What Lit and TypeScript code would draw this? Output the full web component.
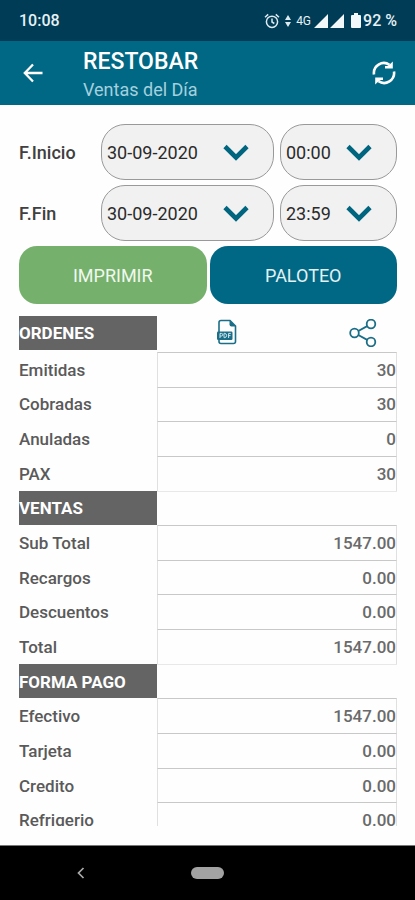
import { LitElement, html, css, svg, nothing } from "lit";
import { customElement } from "lit/decorators.js";

interface Row {
  label: string;
  value?: string;
}

const ROWS: Row[] = [
  { label: "Emitidas", value: "30" },
  { label: "Cobradas", value: "30" },
  { label: "Anuladas", value: "0" },
  { label: "PAX", value: "30" },
  { label: "VENTAS" },
  { label: "Sub Total", value: "1547.00" },
  { label: "Recargos", value: "0.00" },
  { label: "Descuentos", value: "0.00" },
  { label: "Total", value: "1547.00" },
  { label: "FORMA PAGO" },
  { label: "Efectivo", value: "1547.00" },
  { label: "Tarjeta", value: "0.00" },
  { label: "Credito", value: "0.00" },
  { label: "Refrigerio", value: "0.00" },
];

const RANGES = [
  { id: "inicio", label: "F.Inicio", date: "30-09-2020", time: "00:00" },
  { id: "fin", label: "F.Fin", date: "30-09-2020", time: "23:59" },
];

@customElement("status-bar")
export class StatusBar extends LitElement {
  static styles = css`
    :host {
      display: flex;
      align-items: center;
      justify-content: space-between;
      height: 41px;
      padding: 0 18px 0 19px;
      background: #003c55;
      color: #e6f1f5;
      font-size: 16px;
      font-weight: 500;
    }
    .tray {
      display: flex;
      align-items: center;
    }
    .network {
      font-size: 12px;
      font-weight: 400;
      margin-right: 3px;
    }
    .alarm {
      margin-right: 5px;
    }
    .data {
      margin-right: 5px;
    }
    .signal {
      margin-right: 7px;
    }
    .battery {
      margin-right: 2px;
    }
  `;

  render() {
    return html`
      <span>10:08</span>
      <div class="tray">
        <svg class="alarm" width="16" height="16" viewBox="0 0 16 16" fill="none" stroke="#dceaf0" stroke-width="1.5">
          <circle cx="8" cy="8.8" r="5.6" />
          <path d="M8 5.6V9l2.3 1.5M1 4.2l3.2-2.8M15 4.2l-3.2-2.8" />
        </svg>
        <svg class="data" width="6" height="12" viewBox="0 0 6 12" fill="#dceaf0">
          <path d="M3 0l3 5H0zM3 12l3-5H0z" />
        </svg>
        <span class="network">4G</span>
        <svg class="signal" width="30" height="14" viewBox="0 0 30 14" fill="#f2f8fa">
          <path d="M0 14L14 0v14zM16 14L30 0v14z" />
        </svg>
        <svg class="battery" width="10" height="15" viewBox="0 0 10 15" fill="#f2f8fa">
          <path d="M3 0h4v2h2q1 0 1 1v11q0 1-1 1H1q-1 0-1-1V3q0-1 1-1h2z" />
        </svg>
        <span>92 %</span>
      </div>
    `;
  }
}

@customElement("app-root")
export class AppRoot extends LitElement {
  static styles = css`
    :host {
      display: flex;
      flex-direction: column;
      height: 100vh;
      background: #fefefe;
      font-family: Roboto, sans-serif;
      color: #333;
    }
    * {
      box-sizing: border-box;
    }
    button,
    select {
      font: inherit;
      margin: 0;
    }
    .icon-button {
      display: flex;
      padding: 0;
      border: 0;
      background: none;
      cursor: pointer;
    }
    .app-bar {
      display: flex;
      flex: none;
      align-items: center;
      height: 64px;
      padding: 0 18px 0 21px;
      background: #006884;
      color: #fff;
    }
    .titles {
      flex: 1;
      margin-left: 38px;
      padding-top: 6px;
    }
    .title {
      margin: 0;
      font-size: 23px;
      line-height: 28px;
      font-weight: 500;
    }
    .subtitle {
      margin: 0;
      font-size: 18px;
      line-height: 28px;
      color: #a5d0de;
    }
    main {
      display: flex;
      flex: 1;
      flex-direction: column;
      min-height: 0;
      padding: 19px 18px 19px 19px;
    }
    .range {
      display: grid;
      grid-template-columns: 76px 173fr 117fr;
      column-gap: 6px;
      align-items: center;
      margin-bottom: 5px;
    }
    .range label {
      font-size: 18px;
      font-weight: 500;
      color: #404040;
    }
    .picker {
      position: relative;
    }
    .picker select {
      display: block;
      width: 100%;
      height: 56px;
      padding: 0 0 0 5px;
      border: 1px solid #999;
      border-radius: 24px;
      background: #f1f1f1;
      color: #2b2b2b;
      font-size: 18px;
      appearance: none;
    }
    .picker svg {
      position: absolute;
      top: 20px;
      right: 25px;
      pointer-events: none;
    }
    .actions {
      display: grid;
      grid-template-columns: 1fr 1fr;
      gap: 3px;
      margin-bottom: 12px;
    }
    .action {
      height: 58px;
      border: 0;
      border-radius: 18px;
      background: #006884;
      color: #e4f1f4;
      font-size: 18px;
      cursor: pointer;
    }
    .print {
      background: #76b06d;
      color: #f0f8ee;
    }
    .section-bar {
      display: flex;
      flex: none;
      align-items: center;
      margin-bottom: 2px;
    }
    .section {
      width: 138px;
      margin: 0;
      background: #646464;
      color: #fff;
      font-size: 17px;
      font-weight: 700;
      text-align: left;
    }
    .section-bar .section {
      line-height: 34px;
    }
    .tools {
      display: flex;
      flex: 1;
      justify-content: space-between;
      padding: 0 20px 0 59px;
    }
    .scroller {
      flex: 1;
      min-height: 0;
      overflow-y: auto;
      scrollbar-width: none;
    }
    table {
      width: 100%;
      height: 485px;
      border-spacing: 0;
      table-layout: fixed;
      color: #5a5a5a;
      font-size: 17px;
      line-height: 20px;
    }
    .labels {
      width: 138px;
    }
    th,
    td {
      padding: 0;
      border-top: 1px solid transparent;
    }
    .table-section {
      border-top-color: #646464;
    }
    .label {
      font-weight: 500;
      text-align: left;
    }
    .value {
      border: 1px solid #e0e0e0;
      border-width: 1px 1px 0 1px;
      border-top-color: #c8c8c8;
      font-weight: 500;
      color: #6a6a6a;
      text-align: right;
    }
    .blank {
      border-top-color: #e8e8e8;
    }
    .nav-bar {
      display: grid;
      flex: none;
      grid-template-columns: 1fr auto 1fr;
      align-items: center;
      height: 55px;
      background: #000;
      border-top: 1px solid #777;
    }
    .back {
      justify-self: center;
      margin-right: 30px;
    }
    .home {
      width: 33px;
      height: 12px;
      padding: 0;
      border: 0;
      border-radius: 6px;
      background: #a2a2a2;
    }
  `;

  private picker(name: string, id: string, value: string) {
    return html`
      <div class="picker">
        <select id=${id} aria-label=${name}>
          <option>${value}</option>
        </select>
        <svg width="26" height="18" viewBox="0 0 26 18" fill="none" stroke="#00667f" stroke-width="4.6">
          <path d="M2 2.5L13 13.5L24 2.5" />
        </svg>
      </div>
    `;
  }

  private shareNodes() {
    return [
      [5.5, 14],
      [22, 5],
      [22, 23],
    ].map(([x, y]) => svg`<circle cx=${x} cy=${y} r="4.3" />`);
  }

  render() {
    return html`
      <status-bar></status-bar>
      <header class="app-bar">
        <button class="icon-button" aria-label="Volver">
          <svg width="24" height="20" viewBox="0 0 24 20" fill="none" stroke="#fff" stroke-width="2.3">
            <path d="M21.5 10H4M12 1.5L3.8 10l8.2 8.5" />
          </svg>
        </button>
        <div class="titles">
          <h1 class="title">RESTOBAR</h1>
          <p class="subtitle">Ventas del Día</p>
        </div>
        <button class="icon-button" aria-label="Actualizar">
          <svg width="26" height="26" viewBox="0 0 26 26" fill="none" stroke="#fff" stroke-width="2.6">
            <path d="M3 14.5A10 10 0 0 1 18.5 4.8M23 11.5A10 10 0 0 1 7.5 21.2" />
            <path d="M21.8 1.5V8.6h-7.8v-2.6h3zM4.2 24.5V17.4h7.8v2.6h-3z" fill="#fff" stroke="none" />
          </svg>
        </button>
      </header>
      <main>
        ${RANGES.map(
          (r) => html`
            <div class="range">
              <label for="${r.id}-fecha">${r.label}</label>
              ${this.picker(`${r.label} fecha`, `${r.id}-fecha`, r.date)}
              ${this.picker(`${r.label} hora`, `${r.id}-hora`, r.time)}
            </div>
          `
        )}
        <div class="actions">
          <button class="action print">IMPRIMIR</button>
          <button class="action">PALOTEO</button>
        </div>
        <div class="section-bar">
          <h2 class="section">ORDENES</h2>
          <div class="tools">
            <button class="icon-button" aria-label="Exportar PDF">
              <svg width="22" height="26" viewBox="0 0 22 26" fill="none" stroke="#1b6e87" stroke-width="1.6">
                <path d="M3 13V3.5Q3 1.5 5 1.5H14L19.5 7V22.5Q19.5 24.5 17.5 24.5H5Q3 24.5 3 22.5V20" />
                <path d="M13.5 1L20 7.5H15.5Q13.5 7.5 13.5 5.5z" fill="#1b6e87" stroke="none" />
                <rect x="1" y="12.5" width="15.5" height="8.5" rx="1.2" fill="#1b6e87" stroke="none" />
                <path
                  d="M4 19v-4.6h1.4a1.3 1.3 0 0 1 0 2.6H4M8 14.4v4.2h.8q1.8-.3 1.8-2.1t-1.8-2.1zM12.6 19v-4.6h2.2M12.6 16.6h1.9"
                  stroke="#d5e8ee"
                  stroke-width="1"
                />
              </svg>
            </button>
            <button class="icon-button" aria-label="Compartir">
              <svg width="28" height="28" viewBox="0 0 28 28" fill="none" stroke="#1b6e87" stroke-width="1.8">
                ${this.shareNodes()}
                <path d="M9.3 12L18.2 7.1M9.3 16L18.2 20.9" />
              </svg>
            </button>
          </div>
        </div>
        <div class="scroller">
          <table>
            <colgroup>
              <col class="labels" />
              <col />
            </colgroup>
            <tbody>
              ${ROWS.map((row) =>
                row.value === undefined
                  ? html`<tr>
                      <th class="section table-section" scope="rowgroup">${row.label}</th>
                      <td class="blank">${nothing}</td>
                    </tr>`
                  : html`<tr>
                      <th class="label" scope="row">${row.label}</th>
                      <td class="value">${row.value}</td>
                    </tr>`
              )}
            </tbody>
          </table>
        </div>
      </main>
      <nav class="nav-bar">
        <button class="icon-button back" aria-label="Atrás">
          <svg width="10" height="14" viewBox="0 0 10 14" fill="none" stroke="#aaa" stroke-width="1.7">
            <path d="M7.5 2L2.5 7l5 5" />
          </svg>
        </button>
        <button class="home" aria-label="Inicio"></button>
      </nav>
    `;
  }
}
